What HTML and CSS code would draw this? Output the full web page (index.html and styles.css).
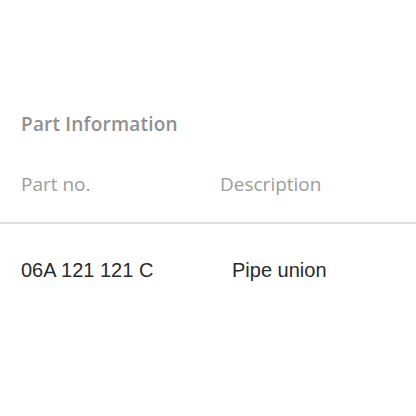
FILE: index.html
```html
<!DOCTYPE html>
<html>
<head>
<meta charset="utf-8">
<link rel="stylesheet" href="styles.css">
</head>
<body>
<section class="part-info">
  <h2 class="title">Part Information</h2>
  <div class="row head">
    <div class="cell c1">Part no.</div>
    <div class="cell c2">Description</div>
  </div>
  <div class="row data">
    <div class="cell c1">06A 121 121 C</div>
    <div class="cell c2">Pipe union</div>
  </div>
</section>
</body>
</html>
```
FILE: styles.css
```css
html, body {
  margin: 0;
  padding: 0;
  background: #ffffff;
}
.part-info {
  padding-top: 112px;
}
.title {
  margin: 0;
  padding-left: 21px;
  font-family: "Open Sans", sans-serif;
  font-weight: 600;
  font-size: 19px;
  letter-spacing: 0.2px;
  line-height: 24px;
  color: #909090;
}
.row {
  display: grid;
  grid-template-columns: 199px 1fr;
  padding-left: 21px;
}
.head {
  margin-top: 36px;
  padding-bottom: 26px;
  border-bottom: 2px solid #e0e0e0;
  font-family: "Open Sans", sans-serif;
  font-size: 19px;
  line-height: 24px;
  color: #9c9c9c;
}
.data {
  margin-top: 34px;
  font-family: "Liberation Sans", Arial, sans-serif;
  font-size: 20px;
  line-height: 24px;
  color: #2a2a2a;
}
.data .c2 {
  padding-left: 12px;
}
```
